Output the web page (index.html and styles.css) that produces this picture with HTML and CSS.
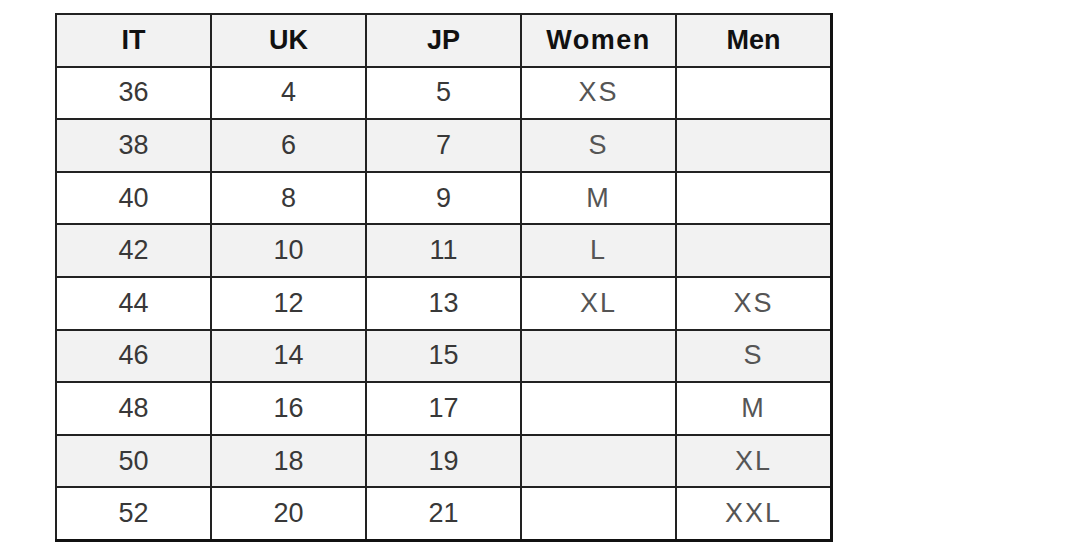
FILE: index.html
```html
<!DOCTYPE html>
<html>
<head>
<meta charset="utf-8">
<link rel="stylesheet" href="styles.css">
</head>
<body>
<table class="size-table">
  <thead>
    <tr><th>IT</th><th>UK</th><th>JP</th><th class="wide">Women</th><th>Men</th></tr>
  </thead>
  <tbody>
    <tr><td>36</td><td>4</td><td>5</td><td class="sz">XS</td><td class="sz"></td></tr>
    <tr><td>38</td><td>6</td><td>7</td><td class="sz">S</td><td class="sz"></td></tr>
    <tr><td>40</td><td>8</td><td>9</td><td class="sz">M</td><td class="sz"></td></tr>
    <tr><td>42</td><td>10</td><td>11</td><td class="sz">L</td><td class="sz"></td></tr>
    <tr><td>44</td><td>12</td><td>13</td><td class="sz">XL</td><td class="sz">XS</td></tr>
    <tr><td>46</td><td>14</td><td>15</td><td class="sz"></td><td class="sz">S</td></tr>
    <tr><td>48</td><td>16</td><td>17</td><td class="sz"></td><td class="sz">M</td></tr>
    <tr><td>50</td><td>18</td><td>19</td><td class="sz"></td><td class="sz">XL</td></tr>
    <tr><td>52</td><td>20</td><td>21</td><td class="sz"></td><td class="sz">XXL</td></tr>
  </tbody>
</table>
</body>
</html>
```
FILE: styles.css
```css
html, body {
  margin: 0;
  padding: 0;
  background: #ffffff;
}
body {
  font-family: "Liberation Sans", Arial, sans-serif;
}
.size-table {
  margin: 13px 0 0 55px;
  border-collapse: collapse;
  table-layout: fixed;
  border-top: 2px solid #1a1a1a;
  border-left: 2px solid #1a1a1a;
  border-right: 3px solid #111;
  border-bottom: 3px solid #111;
}
.size-table th,
.size-table td {
  width: 153px;
  height: 50.6px;
  padding: 0;
  text-align: center;
  vertical-align: middle;
  border: 2px solid #222;
  font-size: 27px;
  line-height: 1;
}
.size-table th {
  background: #f2f2f2;
  color: #111;
  font-weight: bold;
}
.size-table th.wide {
  letter-spacing: 1.5px;
}
.size-table td {
  color: #383838;
  font-weight: normal;
}
.size-table td.sz {
  color: #555;
  letter-spacing: 2px;
}
.size-table tbody tr:nth-child(even) td {
  background: #f2f2f2;
}
```
